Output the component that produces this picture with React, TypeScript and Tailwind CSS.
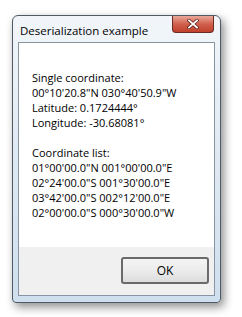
import React from "react";

const font = { fontFamily: '"Open Sans", "Noto Sans", sans-serif' };

export default function App() {
  const lines1 = [
    "Single coordinate:",
    "00°10'20.8\"N 030°40'50.9\"W",
    "Latitude: 0.1724444°",
    "Longitude: -30.68081°",
  ];
  const lines2 = [
    "Coordinate list:",
    "01°00'00.0\"N 001°00'00.0\"E",
    "02°24'00.0\"S 001°30'00.0\"E",
    "03°42'00.0\"S 002°12'00.0\"E",
    "02°00'00.0\"S 000°30'00.0\"W",
  ];
  return (
    <div className="w-[242px] h-[317px] bg-white overflow-hidden pt-[15px] pl-[12px]" style={font}>
      <div className="w-[209px] h-[288px] flex flex-col rounded-t-[6px] rounded-b-[4px] border border-[#4e5a66] bg-gradient-to-b from-[#f2f6fa] via-[#dfe9f2] to-[#cfdfee] shadow-[3px_4px_10px_rgba(0,0,0,0.45)]">
        <div className="h-[26px] flex items-start justify-between pl-[7px]">
          <span className="text-[11.5px] leading-none text-black mt-[9px]">Deserialization example</span>
          <div className="w-[42px] h-[17px] mr-[6px] rounded-b-[4px] border border-t-0 border-[#6b2a24] bg-gradient-to-b from-[#e8a89a] via-[#d0604c] to-[#c0402c] flex items-center justify-center">
            <svg width="12" height="10" viewBox="0 0 12 10">
              <path d="M2 1.5 L10 8.5 M10 1.5 L2 8.5" stroke="#5a1a14" strokeWidth="3.2" strokeLinecap="square" />
              <path d="M2 1.5 L10 8.5 M10 1.5 L2 8.5" stroke="#ffffff" strokeWidth="1.8" strokeLinecap="square" />
            </svg>
          </div>
        </div>
        <div className="flex-1 mx-[5px] mb-[6px] border border-[#8795a3] flex flex-col bg-[#f0f0f0]">
          <div className="h-[204px] bg-white pt-[27px] pl-[13px] text-[11px] leading-[15px] text-black">
            {lines1.map((l) => (
              <div key={l} className="whitespace-nowrap">{l}</div>
            ))}
            <div className="h-[15px]" />
            {lines2.map((l) => (
              <div key={l} className="whitespace-nowrap">{l}</div>
            ))}
          </div>
          <div className="flex-1 flex justify-end items-start pt-[10px] pr-[5px]">
            <div className="w-[88px] h-[27px] rounded-[3px] border-2 border-[#6a6a6a] bg-gradient-to-b from-[#f4f4f4] via-[#ececec] to-[#dcdcdc] flex items-center justify-center text-[12px] text-black">
              OK
            </div>
          </div>
        </div>
      </div>
    </div>
  );
}
